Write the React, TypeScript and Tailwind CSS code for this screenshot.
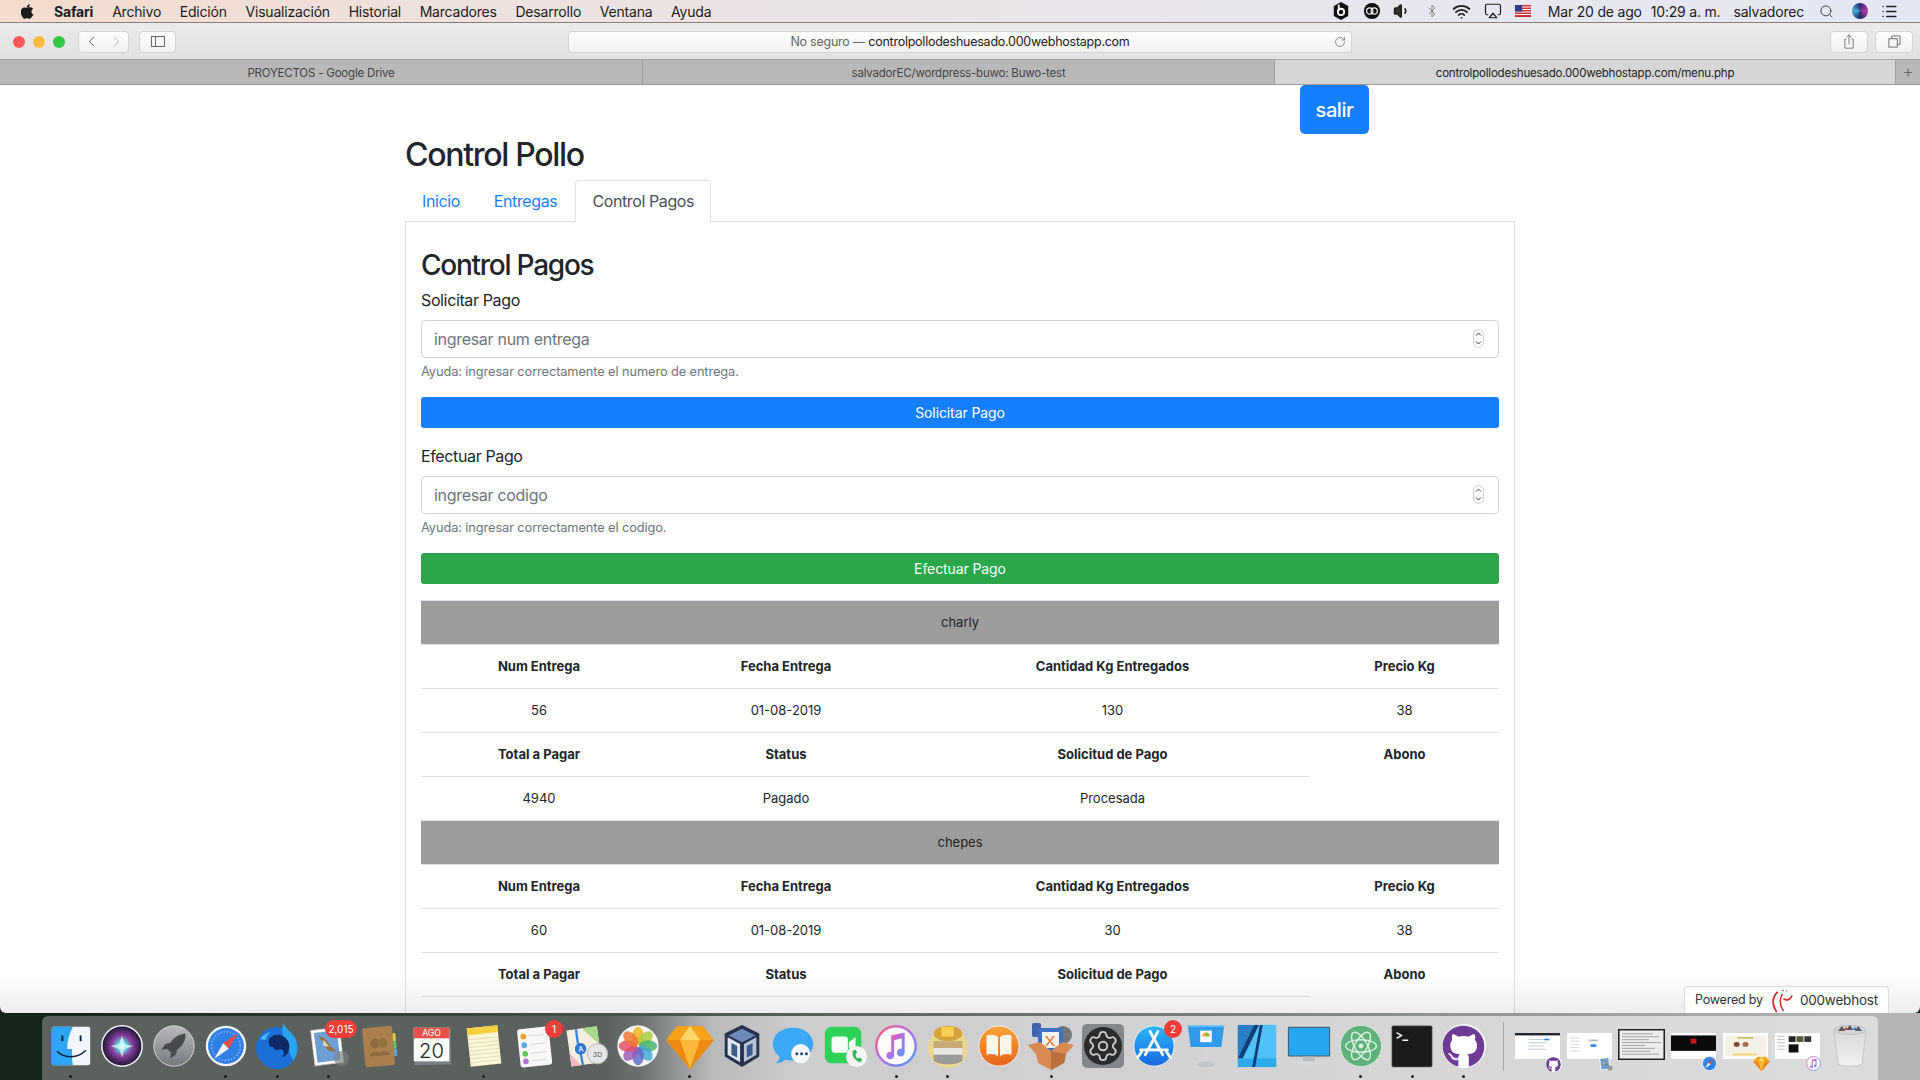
import type { ReactNode } from 'react'
import { Airplay, Bluetooth, ChevronLeft, ChevronRight, List, RotateCw, Search, Settings, Volume1, Wifi } from 'lucide-react'
import { FaGithub } from 'react-icons/fa'

const MENU_ITEMS = ['Archivo', 'Edición', 'Visualización', 'Historial', 'Marcadores', 'Desarrollo', 'Ventana', 'Ayuda']

function Svg({ children, className = 'w-[48px] h-[48px]' }: { children: ReactNode; className?: string }) {
  return (
    <svg viewBox="0 0 50 50" className={className}>
      {children}
    </svg>
  )
}

/* ---------- dock icons ---------- */

const FinderIcon = () => (
  <Svg>
    <rect x="5" y="5" width="40" height="40" rx="2" fill="#f0f6fc" />
    <path d="M7 5h20c-4 8-6 15-6 23h5c0 6 0 11 1 17H7a2 2 0 0 1-2-2V7a2 2 0 0 1 2-2z" fill="#2fa6f5" />
    <path d="M11 31c7 7 21 7 29-1" fill="none" stroke="#10233c" strokeWidth="1.6" strokeLinecap="round" />
    <rect x="15" y="14" width="2" height="6" fill="#10233c" />
    <rect x="34" y="14" width="2" height="6" fill="#10233c" />
  </Svg>
)

const SiriIcon = () => (
  <Svg>
    <defs>
      <radialGradient id="siri" cx="50%" cy="50%" r="50%">
        <stop offset="0%" stopColor="#ffffff" />
        <stop offset="22%" stopColor="#52d8d8" />
        <stop offset="50%" stopColor="#8b3f9e" />
        <stop offset="100%" stopColor="#181630" />
      </radialGradient>
    </defs>
    <circle cx="25" cy="25" r="21" fill="url(#siri)" stroke="#f2f2f2" strokeWidth="1.6" />
    <path d="M25 14l3 9 9 2-9 3-3 9-3-9-9-3 9-2z" fill="#d9f6f6" opacity=".75" />
  </Svg>
)

const LaunchpadIcon = () => (
  <Svg>
    <defs>
      <linearGradient id="launch" x1="0" y1="0" x2="0" y2="1">
        <stop offset="0%" stopColor="#b9bbbd" />
        <stop offset="100%" stopColor="#76797c" />
      </linearGradient>
    </defs>
    <circle cx="25" cy="25" r="21" fill="url(#launch)" stroke="#d6d6d6" />
    <path d="M37 12c-7 1-12 4-16 10l-5 1-4 6 6-1 4 4-1 6 6-4 1-5c6-4 9-9 9-17z" fill="#48494b" />
  </Svg>
)

const SafariIcon = () => (
  <Svg className="w-[46px] h-[46px]">
    <circle cx="25" cy="25" r="22" fill="#f5f5f5" />
    <circle cx="25" cy="25" r="19.5" fill="#2f7fe6" />
    <circle cx="25" cy="25" r="15.5" fill="none" stroke="#a6cdf7" strokeWidth="2" strokeDasharray="1 2.5" />
    <path d="M38 11L22 22l6 6z" fill="#f04a3f" />
    <path d="M12 39l10-17 6 6z" fill="#f4f4f4" />
  </Svg>
)

const FirefoxIcon = () => (
  <Svg className="w-[50px] h-[50px]">
    <circle cx="25" cy="27" r="21" fill="#1c6fd6" />
    <path d="M31 2c2 5 8 8 12 15 4 8 3 17-2 23L33 20c-3-5-3-12-2-18z" fill="#2aa4ee" />
    <path d="M17 18c6-7 15-5 19 2 3 6 1 15-6 16 3-3 2-7-1-8-4 2-7 1-8-2-4 0-5-4-4-8z" fill="#102a66" />
    <path d="M8 18c3-4 6-6 11-7-4 3-5 6-5 8z" fill="#4db6f2" />
  </Svg>
)

const MailIcon = () => (
  <Svg>
    <g transform="rotate(-7 23 25)">
      <rect x="8" y="7" width="30" height="37" fill="#ffffff" stroke="#c9c9c9" strokeDasharray="2 1" />
      <rect x="11" y="10" width="24" height="31" fill="#6d9ed4" />
      <path d="M15 14c5 0 9 5 11 11l7 8-10-4-3-8z" fill="#9a6f3c" />
      <path d="M20 18l5 8-6-2z" fill="#e8dcc4" />
    </g>
    <circle cx="38" cy="38" r="8" fill="#7b7f7d" opacity=".65" />
  </Svg>
)

const ContactsIcon = () => (
  <Svg>
    <g transform="rotate(-5 25 25)">
      <rect x="8" y="5" width="31" height="41" rx="2" fill="#a97f4d" />
      <rect x="39" y="13" width="3" height="8" fill="#e2c84a" />
      <rect x="39" y="21" width="3" height="8" fill="#6cc06a" />
      <rect x="39" y="29" width="3" height="8" fill="#5fa5dc" />
      <circle cx="20" cy="22" r="5" fill="#8d6a3e" />
      <circle cx="28" cy="22" r="5" fill="#94703f" />
      <path d="M13 35c1-6 13-6 14 0zM22 35c1-6 12-6 13 0z" fill="#8d6a3e" />
    </g>
  </Svg>
)

const CalendarIcon = () => (
  <svg viewBox="0 0 50 50" className="w-[48px] h-[48px]">
    <path d="M6 8l38-1 1 37-38 1z" fill="#7b8084" />
    <rect x="6" y="6" width="37" height="35" fill="#ffffff" />
    <rect x="6" y="6" width="37" height="11" fill="#e8504a" />
    <text x="24.5" y="15" textAnchor="middle" fontSize="9" fill="#ffffff" fontFamily="Inter, sans-serif">AGO</text>
    <text x="24.5" y="37" textAnchor="middle" fontSize="21" fill="#202020" fontFamily="Inter, sans-serif" fontWeight="300">20</text>
  </svg>
)

const NotesIcon = () => (
  <Svg>
    <g transform="rotate(-6 25 25)">
      <rect x="9" y="5" width="32" height="40" fill="#fbf7d4" />
      <rect x="9" y="5" width="32" height="7" fill="#f6cf3f" />
      <path d="M9 17h32M9 21h32M9 25h32M9 29h32M9 33h32M9 37h32M9 41h32" stroke="#d9d4b0" strokeWidth=".8" />
    </g>
  </Svg>
)

const RemindersIcon = () => (
  <Svg>
    <g transform="rotate(-6 25 25)">
      <rect x="8" y="6" width="33" height="40" rx="3" fill="#f7f7f7" />
      <circle cx="14" cy="14" r="3" fill="#f29b2e" />
      <circle cx="14" cy="23" r="3" fill="#5ba7e8" />
      <circle cx="14" cy="32" r="3" fill="#5fc65a" />
      <circle cx="14" cy="40" r="3" fill="#b56fd3" />
      <path d="M20 14h16M20 23h16M20 32h16M20 40h16" stroke="#cfcfcf" strokeWidth=".8" />
    </g>
  </Svg>
)

const MapsIcon = () => (
  <Svg>
    <g transform="rotate(-8 25 25)">
      <rect x="6" y="6" width="32" height="38" fill="#f3eedf" />
      <path d="M22 6h16v19z" fill="#a7d98c" />
      <path d="M6 30l10 14H6z" fill="#f3b7c3" />
      <path d="M16 6v14c0 6 2 9 2 24" stroke="#3f87d9" strokeWidth="2.5" fill="none" />
      <circle cx="18" cy="27" r="6" fill="#2f79d6" />
      <text x="18" y="30" textAnchor="middle" fontSize="8" fill="#fff" fontFamily="Inter, sans-serif">A</text>
    </g>
    <circle cx="36" cy="33" r="10.5" fill="#e6e6e6" stroke="#b5b5b5" />
    <text x="36" y="36" textAnchor="middle" fontSize="7" fill="#555" fontFamily="Inter, sans-serif">3D</text>
  </Svg>
)

const PHOTO_COLORS = ['#f6b21c', '#a7cf3c', '#45b36b', '#3fa7d6', '#5a68c9', '#9b59b6', '#e84a5f', '#f2762e']

const PhotosIcon = () => (
  <Svg>
    <circle cx="25" cy="25" r="21.5" fill="#f6f6f6" />
    {PHOTO_COLORS.map((color, i) => (
      <ellipse key={color} cx="25" cy="14.5" rx="6" ry="9.5" fill={color} opacity=".82" transform={`rotate(${i * 45} 25 25)`} />
    ))}
  </Svg>
)

const SketchIcon = () => (
  <Svg className="w-[50px] h-[50px]">
    <path d="M12 5h26l11 14-24 29L1 19z" fill="#f7a21b" />
    <path d="M12 5h26l-13 0-10 14h20L25 5z" fill="#fdd66a" />
    <path d="M15 19h20L25 48z" fill="#fbb83a" />
    <path d="M1 19h14l10 29zM49 19H35L25 48z" fill="#ee8a12" />
  </Svg>
)

const VirtualBoxIcon = () => (
  <Svg>
    <path d="M25 3l18 9v24l-18 11L7 36V12z" fill="#28324f" />
    <path d="M25 7l14 7-14 7-14-7z" fill="#6f89b6" />
    <path d="M10 16l13 7v19l-13-8z" fill="#dfe6ee" />
    <path d="M40 16l-13 7v19l13-8z" fill="#b6c4d6" />
    <path d="M14 22l6 3v12l-6-3zM36 22l-6 3v12l6-3z" fill="#3f5a8a" />
  </Svg>
)

const MessagesIcon = () => (
  <Svg>
    <path d="M25 6c12 0 21 7 21 17s-9 17-21 17c-3 0-5 0-8-1-2 2-6 4-10 4 3-2 4-5 4-7-4-3-7-8-7-13C4 13 13 6 25 6z" fill="#3aa8f5" />
    <circle cx="33" cy="33" r="10" fill="#f4f7fa" />
    <circle cx="29" cy="33" r="1.6" fill="#2a4d6e" />
    <circle cx="34" cy="33" r="1.6" fill="#2a4d6e" />
    <circle cx="39" cy="33" r="1.6" fill="#2a4d6e" />
  </Svg>
)

const FaceTimeIcon = () => (
  <Svg>
    <rect x="4" y="5" width="38" height="38" rx="7" fill="#2fd158" />
    <rect x="11" y="15" width="17" height="17" rx="3.5" fill="#f5fff7" />
    <path d="M29 21l7-5v16l-7-5z" fill="#f5fff7" />
    <circle cx="37" cy="36" r="11" fill="#f4f4f4" />
    <path d="M33 30c-1 6 2 10 8 12l2-3-3-2-2 1c-1-1-2-3-2-5l2-1-2-3z" fill="#33b84f" />
  </Svg>
)

const ItunesIcon = () => (
  <Svg>
    <defs>
      <linearGradient id="itunes" x1="0" y1="0" x2="1" y2="1">
        <stop offset="0%" stopColor="#fc5c7d" />
        <stop offset="50%" stopColor="#b06fe8" />
        <stop offset="100%" stopColor="#4f9ef5" />
      </linearGradient>
    </defs>
    <circle cx="25" cy="25" r="20.5" fill="#fbfbfb" stroke="url(#itunes)" strokeWidth="2.5" />
    <path d="M20 14l14-3v21a4 4 0 1 1-3-4V17l-8 2v16a4 4 0 1 1-3-4z" fill="url(#itunes)" />
  </Svg>
)

const SequelIcon = () => (
  <Svg>
    <circle cx="25" cy="27" r="21" fill="#f0d97e" opacity=".75" />
    <ellipse cx="25" cy="12" rx="15" ry="8" fill="#d3a23a" />
    <rect x="18" y="5" width="13" height="10" rx="1" fill="#f6cf4f" />
    <path d="M10 20h30v7c0 3-7 5-15 5s-15-2-15-5z" fill="#c9a777" />
    <path d="M10 27h30v6c0 3-7 5-15 5s-15-2-15-5z" fill="#e8e6e0" />
    <path d="M10 34h30v5c0 3-7 5-15 5s-15-2-15-5z" fill="#9b9a96" />
  </Svg>
)

const BooksIcon = () => (
  <Svg>
    <defs>
      <linearGradient id="books" x1="0" y1="0" x2="0" y2="1">
        <stop offset="0%" stopColor="#faa53a" />
        <stop offset="100%" stopColor="#e8641d" />
      </linearGradient>
    </defs>
    <circle cx="25" cy="25" r="21" fill="url(#books)" stroke="#f3f3f3" />
    <path d="M24 16c-3-3-8-3-12-2v20c4-1 9-1 12 2zM26 16c3-3 8-3 12-2v20c-4-1-9-1-12 2z" fill="#fdf5e8" />
  </Svg>
)

const XamppIcon = () => (
  <Svg className="w-[50px] h-[50px]">
    <rect x="6" y="2" width="9" height="14" rx="2" fill="#3f62a8" />
    <circle cx="37" cy="14" r="9" fill="#777" />
    <rect x="12" y="7" width="25" height="24" fill="#3e6fc0" />
    <rect x="16" y="11" width="17" height="16" fill="#f3f3f3" />
    <path d="M21 15l3 4 3-4h2l-4 5 4 5h-2l-3-4-3 4h-2l4-5-4-5z" fill="#e8792b" />
    <path d="M2 24l12-3 11 9 11-9 12 3-8 9-2 9-13 7-13-7-2-9z" fill="#d98a52" />
    <path d="M25 30v19l13-7 2-9z" fill="#b9703d" />
  </Svg>
)

const SysPrefsIcon = () => (
  <div className="w-[42px] h-[44px] rounded-[5px] bg-[#84878a] flex items-center justify-center">
    <div className="w-[38px] h-[38px] rounded-full bg-[#2b2c2e] flex items-center justify-center">
      <Settings size={34} strokeWidth={1.3} className="text-[#c9cbcd]" />
    </div>
  </div>
)

const AppStoreIcon = () => (
  <Svg>
    <defs>
      <linearGradient id="store" x1="0" y1="0" x2="0" y2="1">
        <stop offset="0%" stopColor="#2cb6f6" />
        <stop offset="100%" stopColor="#1668e3" />
      </linearGradient>
    </defs>
    <circle cx="25" cy="25" r="21" fill="url(#store)" stroke="#f2f2f2" />
    <path d="M29 10L16 34M21 10l13 24M11 29h28M8 37l4-6M38 31l4 6" stroke="#ffffff" strokeWidth="3" strokeLinecap="round" fill="none" />
  </Svg>
)

const KeynoteIcon = () => (
  <Svg>
    <path d="M6 3h38l-3 23H9z" fill="#2f9bea" />
    <path d="M6 3h38v2H6z" fill="#74c6f7" />
    <path d="M19 9h12v12H19z" fill="#ffffff" />
    <path d="M25 11a4 4 0 0 1 4 4h-4z" fill="#7ac143" />
    <path d="M25 11v4h-4a4 4 0 0 1 4-4z" fill="#f2a33a" />
    <rect x="23.5" y="26" width="3" height="16" fill="#d3d7da" />
    <ellipse cx="25" cy="44" rx="9" ry="3.2" fill="#c2c6c9" />
  </Svg>
)

const AffinityIcon = () => (
  <Svg>
    <rect x="5" y="3" width="40" height="44" fill="#4fc3f7" />
    <path d="M5 3h17L5 38z" fill="#2a7fc4" />
    <path d="M5 38L22 3h5L10 38z" fill="#0f3d74" />
    <path d="M5 38h40v9H5z" fill="#2fa8e8" />
    <path d="M28 3h3l-8 44h-3z" fill="#0f3d74" />
  </Svg>
)

const MonitorIcon = () => (
  <Svg>
    <rect x="3" y="5" width="44" height="31" rx="1" fill="#4f5459" />
    <rect x="4" y="6" width="42" height="29" fill="#24a7ee" />
    <rect x="19" y="36" width="12" height="6" fill="#b9bdc0" />
    <rect x="13" y="41" width="24" height="3" rx="1" fill="#d7d9db" />
  </Svg>
)

const AtomIcon = () => (
  <Svg>
    <circle cx="25" cy="25" r="21.5" fill="#5fb27c" stroke="#d8e9de" />
    <g fill="none" stroke="#d9f2e2" strokeWidth="1.5">
      <ellipse cx="25" cy="25" rx="16" ry="6.5" />
      <ellipse cx="25" cy="25" rx="16" ry="6.5" transform="rotate(60 25 25)" />
      <ellipse cx="25" cy="25" rx="16" ry="6.5" transform="rotate(120 25 25)" />
    </g>
    <circle cx="25" cy="25" r="2.6" fill="#d9f2e2" />
  </Svg>
)

const TerminalIcon = () => (
  <Svg>
    <rect x="4" y="4" width="42" height="43" rx="1.5" fill="#1b1b1b" stroke="#7d7d7d" strokeWidth=".6" />
    <path d="M9 11l5 3-5 3" fill="none" stroke="#f1f1f1" strokeWidth="1.6" />
    <path d="M15 19h6" stroke="#f1f1f1" strokeWidth="1.6" />
  </Svg>
)

const GithubIcon = ({ size = 44 }: { size?: number }) => (
  <div className="rounded-full bg-white flex items-center justify-center" style={{ width: size, height: size }}>
    <FaGithub size={size - 1} className="text-[#6d3b96]" />
  </div>
)

const TrashIcon = () => (
  <svg viewBox="0 0 36 44" className="w-[36px] h-[44px]">
    <defs>
      <linearGradient id="bin" x1="0" y1="0" x2="0" y2="1">
        <stop offset="0%" stopColor="#d9dadc" />
        <stop offset="100%" stopColor="#f1f1f2" />
      </linearGradient>
    </defs>
    <path d="M2 7c5 3 27 3 32 0l-4 33c-3 3-21 3-24 0z" fill="url(#bin)" stroke="#c6c7c9" />
    <ellipse cx="18" cy="6" rx="16" ry="4.5" fill="#d2d3d5" stroke="#bfc0c2" />
    <path d="M6 7l4-5 3 5zM14 6l4-5 3 5zM23 7l3-5 4 5z" fill="#55585c" />
    <path d="M11 6l3-3 2 3z" fill="#c9473f" />
    <path d="M20 6l3-3 2 3z" fill="#3f78c9" />
  </svg>
)

const DOCK_APPS: { icon: ReactNode; dot?: boolean; badge?: string }[] = [
  { icon: <FinderIcon />, dot: true },
  { icon: <SiriIcon /> },
  { icon: <LaunchpadIcon /> },
  { icon: <SafariIcon />, dot: true },
  { icon: <FirefoxIcon />, dot: true },
  { icon: <MailIcon />, dot: true, badge: '2,015' },
  { icon: <ContactsIcon /> },
  { icon: <CalendarIcon /> },
  { icon: <NotesIcon />, dot: true },
  { icon: <RemindersIcon />, badge: '1' },
  { icon: <MapsIcon /> },
  { icon: <PhotosIcon /> },
  { icon: <SketchIcon />, dot: true },
  { icon: <VirtualBoxIcon /> },
  { icon: <MessagesIcon /> },
  { icon: <FaceTimeIcon /> },
  { icon: <ItunesIcon />, dot: true },
  { icon: <SequelIcon />, dot: true },
  { icon: <BooksIcon /> },
  { icon: <XamppIcon />, dot: true },
  { icon: <SysPrefsIcon /> },
  { icon: <AppStoreIcon />, badge: '2' },
  { icon: <KeynoteIcon /> },
  { icon: <AffinityIcon /> },
  { icon: <MonitorIcon /> },
  { icon: <AtomIcon />, dot: true },
  { icon: <TerminalIcon />, dot: true },
  { icon: <GithubIcon />, dot: true },
]

/* ---------- minimized windows in the dock ---------- */

function MiniWindow({ dark, tall, children, badge }: { dark?: string; tall?: boolean; children?: ReactNode; badge?: ReactNode }) {
  return (
    <div className="relative w-[52px] h-[52px] flex items-center justify-center shrink-0">
      <svg viewBox="0 0 46 32" preserveAspectRatio="none" className={tall ? 'w-[47px] h-[31px] -mt-[7px]' : 'w-[45px] h-[26px] -mt-[4px]'}>
        <rect x="0" y="0" width="46" height="32" fill={dark ?? '#ffffff'} />
        {children}
      </svg>
      {badge && <div className="absolute right-[2px] bottom-[2px]">{badge}</div>}
    </div>
  )
}

const BADGE_SCALE = 'w-[17px] h-[17px] flex items-center justify-center [&>svg]:w-[17px] [&>svg]:h-[17px]'

function Dock() {
  return (
    <div className="h-[67px] shrink-0 bg-[linear-gradient(90deg,#16231a_0px,#16231a_60px,#b4b4b4_1860px,#b4b4b4_100%)] pt-[3px]">
      <div className="ml-[42px] w-[1836px] h-[64px] rounded-t-[6px] bg-[linear-gradient(90deg,#5b625e_0px,#5b625e_560px,#6d7270_600px,#b9babb_670px,#cdcdcf_760px,#dcdcdd_100%)] flex pt-[6px] pl-[3px]">
        {DOCK_APPS.map((app, i) => (
          <div key={i} className="relative w-[51.6px] h-[48px] shrink-0 flex flex-col items-center">
            <div className="h-[48px] flex items-center justify-center">{app.icon}</div>
            {app.dot && <div className="absolute top-[53px] w-[3px] h-[3px] rounded-full bg-[#1a1a1a]" />}
            {app.badge && (
              <div className="absolute top-[-2px] right-[-2px] h-[18px] min-w-[18px] px-[3px] rounded-full bg-[#ef3e3a] text-white text-[10px] leading-[18px] text-center">
                {app.badge}
              </div>
            )}
          </div>
        ))}
        <div className="w-px h-[48px] bg-[#a8a8a8] ml-[13px] mr-[8px] shrink-0" />
        <MiniWindow badge={<GithubIcon size={16} />}>
          <rect width="46" height="3" fill="#24292e" />
          <path d="M14 8h16M14 12h18M14 16h16M14 20h18" stroke="#b8c6d6" strokeWidth="1" />
          <rect x="30" y="7" width="5" height="2" fill="#2f7fe6" />
        </MiniWindow>
        <MiniWindow badge={<div className={BADGE_SCALE}><MailIcon /></div>}>
          <path d="M3 6h10M3 10h10M3 14h10M3 18h10M3 22h10" stroke="#d5d5d5" strokeWidth="1" />
          <rect x="22" y="8" width="10" height="2" fill="#bbb" />
          <rect x="24" y="14" width="6" height="3" fill="#2f7fe6" />
        </MiniWindow>
        <MiniWindow dark="#202020" tall>
          <rect x="1.5" y="1.5" width="43" height="29" fill="#ececec" />
          <path d="M4 5h30M4 8h36M4 11h26M4 14h38M4 17h22M4 20h32M4 23h28M4 26h36" stroke="#9b9b9b" strokeWidth=".9" />
        </MiniWindow>
        <MiniWindow badge={<div className={BADGE_SCALE}><SafariIcon /></div>}>
          <rect y="3" width="46" height="19" fill="#0b0b0b" />
          <rect x="20" y="7" width="6" height="6" fill="#c4161c" />
        </MiniWindow>
        <MiniWindow badge={<div className={BADGE_SCALE}><SketchIcon /></div>}>
          <rect x="2" y="4" width="42" height="24" fill="#f4f0e4" />
          <rect x="15" y="5" width="16" height="2" fill="#c8b865" />
          <circle cx="14" cy="14" r="3" fill="#7a4a3a" />
          <circle cx="23" cy="14" r="3" fill="#a56a50" />
          <rect x="10" y="25" width="24" height="3" fill="#f3d98a" />
        </MiniWindow>
        <MiniWindow badge={<div className={BADGE_SCALE}><ItunesIcon /></div>}>
          <path d="M2 4h8M2 8h8M2 12h8M2 16h8M2 20h8" stroke="#bdbdbd" strokeWidth="1" />
          <rect x="14" y="4" width="7" height="7" fill="#222" />
          <rect x="22" y="4" width="7" height="7" fill="#553" />
          <rect x="30" y="4" width="7" height="7" fill="#333" />
          <rect x="14" y="14" width="10" height="10" fill="#111" />
        </MiniWindow>
        <div className="w-[52px] h-[48px] flex items-center justify-center shrink-0">
          <TrashIcon />
        </div>
      </div>
    </div>
  )
}

/* ---------- mac os chrome ---------- */

function AppleLogo() {
  return (
    <svg viewBox="0 0 170 200" className="w-[13px] h-[15px] fill-[#1a1a1a]">
      <path d="M150 155c-3 7-6 13-10 19-5 8-10 13-13 16-5 5-11 7-17 7-4 0-9-1-15-4-6-2-11-4-16-4s-11 1-17 4c-6 2-10 4-14 4-6 0-12-2-17-7-4-3-9-9-14-17-6-9-11-19-15-31-4-13-6-25-6-37 0-14 3-25 9-35 5-8 11-14 19-18 8-5 16-7 25-7 5 0 11 1 19 4s13 4 15 4 7-1 17-5c9-3 17-5 23-4 17 1 30 8 38 20-15 9-23 22-23 38 0 13 5 23 14 32 4 4 9 7 14 9-1 3-3 7-4 10zM117 7c0 10-4 19-11 28-9 10-19 16-31 15 0-1 0-3 0-4 0-9 4-19 11-27 4-4 8-8 14-11s11-4 16-5c0 2 1 3 1 4z" />
    </svg>
  )
}

function MenuBar() {
  return (
    <div className="h-[23px] shrink-0 flex items-center bg-[linear-gradient(90deg,#f3dccf_0%,#ebe4e6_40%,#e5e8f4_100%)] border-b border-[#8d7f78] text-[14px] text-[#1c1c1c] tracking-[-0.2px]">
      <div className="ml-[21px] mr-[20px]">
        <AppleLogo />
      </div>
      <span className="font-bold mr-[19px]">Safari</span>
      <div className="flex gap-[18.7px]">
        {MENU_ITEMS.map(item => (
          <span key={item}>{item}</span>
        ))}
      </div>
      <div className="ml-auto flex items-center pr-[22px] text-[#202020]">
        <svg viewBox="0 0 20 22" className="w-[18px] h-[20px] mr-[13px]">
          <path d="M10 1l8 4.5v11L10 21l-8-4.5v-11z" fill="#111" />
          <circle cx="10" cy="12" r="3.5" fill="none" stroke="#fff" strokeWidth="2" />
          <path d="M7.5 4v7" stroke="#fff" strokeWidth="2" />
        </svg>
        <svg viewBox="0 0 20 20" className="w-[18px] h-[18px] mr-[12px]">
          <circle cx="10" cy="10" r="9" fill="#111" />
          <circle cx="7.5" cy="10" r="3.5" fill="none" stroke="#eee" strokeWidth="1.4" />
          <circle cx="12.5" cy="10" r="3.5" fill="none" stroke="#eee" strokeWidth="1.4" />
        </svg>
        <Volume1 size={18} strokeWidth={2} fill="#333" className="mr-[14px]" />
        <Bluetooth size={14} strokeWidth={1.5} className="mr-[13px] text-[#777]" />
        <Wifi size={19} strokeWidth={2.2} className="mr-[13px]" />
        <Airplay size={18} strokeWidth={1.6} className="mr-[13px]" />
        <svg viewBox="0 0 16 12" className="w-[16px] h-[12px] mr-[17px]">
          <rect width="16" height="12" fill="#c9313a" />
          <path d="M0 2h16M0 4.5h16M0 7h16M0 9.5h16" stroke="#fff" strokeWidth="1" />
          <rect width="7" height="6.5" fill="#2c3f86" />
        </svg>
        <span className="mr-[9px]">Mar 20 de ago</span>
        <span className="mr-[13px]">10:29 a. m.</span>
        <span className="mr-[15px]">salvadorec</span>
        <Search size={15} strokeWidth={1.6} className="mr-[18px] text-[#444]" />
        <div className="w-[16px] h-[16px] rounded-full bg-[conic-gradient(#2e2a7c,#b13aa0,#1e2a6e,#49b4d6,#2e2a7c)] mr-[13px]" />
        <List size={17} strokeWidth={2} />
      </div>
    </div>
  )
}

const TOOL_BUTTON = 'h-[22px] bg-[linear-gradient(#fdfdfd,#f1f1f1)] border border-[#d5d5d5] rounded-[4px] flex items-center justify-center shrink-0'

function Toolbar() {
  return (
    <div className="h-[37px] shrink-0 flex items-center pt-[1px] bg-[linear-gradient(#ebebeb,#e2e2e3)] border-b border-[#a5a5a5] relative">
      <div className="flex gap-[8px] ml-[13px]">
        <div className="w-[12px] h-[12px] rounded-full bg-[#fc5b57]" />
        <div className="w-[12px] h-[12px] rounded-full bg-[#fdbc3f]" />
        <div className="w-[12px] h-[12px] rounded-full bg-[#33c748]" />
      </div>
      <div className={`${TOOL_BUTTON} w-[51px] ml-[13px]`}>
        <ChevronLeft size={17} strokeWidth={1.3} className="text-[#555] mr-[8px]" />
        <ChevronRight size={17} strokeWidth={1.3} className="text-[#aaa]" />
      </div>
      <div className={`${TOOL_BUTTON} w-[37px] ml-[10px]`}>
        <div className="w-[14px] h-[11px] border border-[#666] flex">
          <div className="w-[4px] border-r border-[#666]" />
        </div>
      </div>
      <div className={`${TOOL_BUTTON} w-[784px] ml-[392px] relative text-[12.5px] tracking-[-0.25px] text-[#666] pt-[1px]`}>
        <span>
          No seguro — <span className="text-[#222]">controlpollodeshuesado.000webhostapp.com</span>
        </span>
        <RotateCw size={12} strokeWidth={1.3} className="absolute right-[5px] top-[4px] text-[#555]" />
      </div>
      <div className={`${TOOL_BUTTON} w-[38px] ml-auto`}>
        <svg viewBox="0 0 14 18" className="w-[12px] h-[15px] fill-none stroke-[#666]">
          <path d="M4 6H2v11h10V6h-2M7 12V1M4 4l3-3 3 3" />
        </svg>
      </div>
      <div className={`${TOOL_BUTTON} w-[38px] ml-[7px] mr-[7px]`}>
        <svg viewBox="0 0 14 14" className="w-[13px] h-[13px] fill-none stroke-[#666]">
          <rect x="1" y="4" width="9" height="9" />
          <path d="M4 4V1h9v9h-3" />
        </svg>
      </div>
    </div>
  )
}

function TabBar() {
  const tabs = [
    { label: 'PROYECTOS - Google Drive', width: 'w-[643px]', active: false },
    { label: 'salvadorEC/wordpress-buwo: Buwo-test', width: 'w-[632px]', active: false },
    { label: 'controlpollodeshuesado.000webhostapp.com/menu.php', width: 'w-[621px]', active: true },
  ]
  return (
    <div className="h-[25px] shrink-0 flex bg-[#b8b8b8] border-b border-[#9c9c9c] text-[11.5px] tracking-[-0.2px]">
      {tabs.map(tab => (
        <div
          key={tab.label}
          className={`${tab.width} flex items-center justify-center pt-[4px] border-r border-[#9e9e9e] ${
            tab.active ? 'bg-[#d6d6d6] text-[#222]' : 'text-[#444]'
          }`}
        >
          {tab.label}
        </div>
      ))}
      <div className="flex-1 flex items-center justify-center text-[#666] text-[17px] font-light">+</div>
    </div>
  )
}

/* ---------- page ---------- */

function NumberField({ placeholder }: { placeholder: string }) {
  return (
    <div className="relative">
      <input
        placeholder={placeholder}
        readOnly
        className="w-full h-[38px] px-[12px] border border-[#ced4da] rounded-[4px] bg-white text-[16px] tracking-[-0.3px] placeholder:text-[#6c757d] outline-none"
      />
      <svg viewBox="0 0 11 19" className="absolute right-[15px] top-[9px] w-[11px] h-[19px] fill-none">
        <rect x=".5" y=".5" width="10" height="18" rx="5" fill="#fff" stroke="#cfcfcf" />
        <path d="M3 6.5l2.5-2.5L8 6.5M3 12.5L5.5 15 8 12.5" stroke="#444" />
      </svg>
    </div>
  )
}

function DeliveryTable({ name, values }: { name: string; values: string[] }) {
  const td = 'h-[44px] border-t border-[#dee2e6] p-0 text-center align-middle'
  const th = `${td} font-bold`
  return (
    <tbody>
      <tr>
        <td colSpan={4} className={`${td} bg-[#9c9c9c]`}>
          {name}
        </td>
      </tr>
      <tr>
        <th className={th}>Num Entrega</th>
        <th className={th}>Fecha Entrega</th>
        <th className={th}>Cantidad Kg Entregados</th>
        <th className={th}>Precio Kg</th>
      </tr>
      <tr>
        <td className={td}>{values[0]}</td>
        <td className={td}>01-08-2019</td>
        <td className={td}>{values[1]}</td>
        <td className={td}>38</td>
      </tr>
      <tr>
        <th className={th}>Total a Pagar</th>
        <th className={th}>Status</th>
        <th className={th}>Solicitud de Pago</th>
        <th rowSpan={2} className={`${td} font-bold align-top pt-[12px]`}>
          Abono
        </th>
      </tr>
      <tr>
        <td className={td}>{values[2]}</td>
        <td className={td}>Pagado</td>
        <td className={td}>Procesada</td>
      </tr>
    </tbody>
  )
}

function PoweredBy() {
  return (
    <div className="absolute right-[31px] bottom-0 h-[27px] w-[205px] bg-white border border-b-0 border-[#dcdcdc] rounded-t-[4px] flex items-center justify-center text-[12.5px] tracking-[-0.2px] text-[#333]">
      <span>Powered by</span>
      <svg viewBox="0 0 24 26" className="w-[23px] h-[25px] mx-[7px] fill-none stroke-[#d5262b]">
        <path d="M8 4c-5 5-7 12-1 21" strokeWidth="1.8" />
        <path d="M13 6c-3 5-4 10 1 18" strokeWidth="1.6" />
        <path d="M14 11c4 3 7 1 9-3" strokeWidth="1.8" />
        <path d="M13 3l1-1M17 3l1 0" strokeWidth="1.4" />
      </svg>
      <span className="text-[13.5px]">000webhost</span>
    </div>
  )
}

function Page() {
  return (
    <main className="relative flex-1 min-h-0 overflow-hidden rounded-b-[6px] bg-white text-[#212529]">
      <div className="w-[1110px] mx-auto">
        <div className="flex justify-end pr-[146px]">
          <button className="h-[49px] w-[69px] rounded-[5px] bg-[#167fff] text-white text-[20px] font-medium tracking-[-0.4px]">salir</button>
        </div>
        <h2 className="h-[38px] mt-[2px] mb-[6px] text-[32px] leading-[38px] font-medium tracking-[-1.3px]">Control Pollo</h2>
        <nav className="flex h-[42px] border-b border-[#dee2e6] text-[16px] tracking-[-0.4px]">
          <a className="h-[41px] px-[17px] flex items-center text-[#167fff]">Inicio</a>
          <a className="h-[41px] pl-[17px] pr-[18px] flex items-center text-[#167fff]">Entregas</a>
          <a className="h-[42px] w-[136px] pb-[2px] justify-center flex items-center text-[#495057] bg-white border border-b-0 border-[#dee2e6] rounded-t-[4px] -mb-px">
            Control Pagos
          </a>
        </nav>
        <section className="border-x border-[#dee2e6] px-[15px] pt-[26px]">
          <h3 className="h-[34px] mb-[6px] text-[28px] leading-[34px] font-medium tracking-[-1.25px]">Control Pagos</h3>
          <label className="block text-[16px] leading-[24px] mb-[8px] tracking-[-0.37px]">Solicitar Pago</label>
          <NumberField placeholder="ingresar num entrega" />
          <p className="mt-[4px] mb-[16px] text-[12.8px] leading-[19px] tracking-[-0.1px] text-[#6c757d]">
            Ayuda: ingresar correctamente el numero de entrega.
          </p>
          <button className="w-full h-[31px] rounded-[3px] bg-[#167fff] text-white text-[14px] tracking-[-0.1px]">Solicitar Pago</button>
          <label className="block mt-[16px] text-[16px] leading-[24px] mb-[8px] tracking-[-0.37px]">Efectuar Pago</label>
          <NumberField placeholder="ingresar codigo" />
          <p className="mt-[4px] mb-[16px] text-[12.8px] leading-[19px] tracking-[-0.1px] text-[#6c757d]">Ayuda: ingresar correctamente el codigo.</p>
          <button className="w-full h-[31px] rounded-[3px] bg-[#2ba64b] text-white text-[14px] tracking-[-0.1px]">Efectuar Pago</button>
          <table className="w-full mt-[16px] table-fixed border-collapse text-[13px]">
            <colgroup>
              <col className="w-[236px]" />
              <col className="w-[258px]" />
              <col className="w-[395px]" />
              <col className="w-[189px]" />
            </colgroup>
            <DeliveryTable name="charly" values={['56', '130', '4940']} />
            <DeliveryTable name="chepes" values={['60', '30', '1140']} />
          </table>
        </section>
      </div>
      <div className="absolute inset-x-0 bottom-0 h-[40px] bg-[linear-gradient(transparent,rgba(0,0,0,0.07))] pointer-events-none" />
      <PoweredBy />
    </main>
  )
}

export default function App() {
  return (
    <div className="w-[1920px] h-screen flex flex-col overflow-hidden bg-[#16231a] font-[family-name:Inter,'Noto_Sans',sans-serif]">
      <MenuBar />
      <Toolbar />
      <TabBar />
      <Page />
      <Dock />
    </div>
  )
}
